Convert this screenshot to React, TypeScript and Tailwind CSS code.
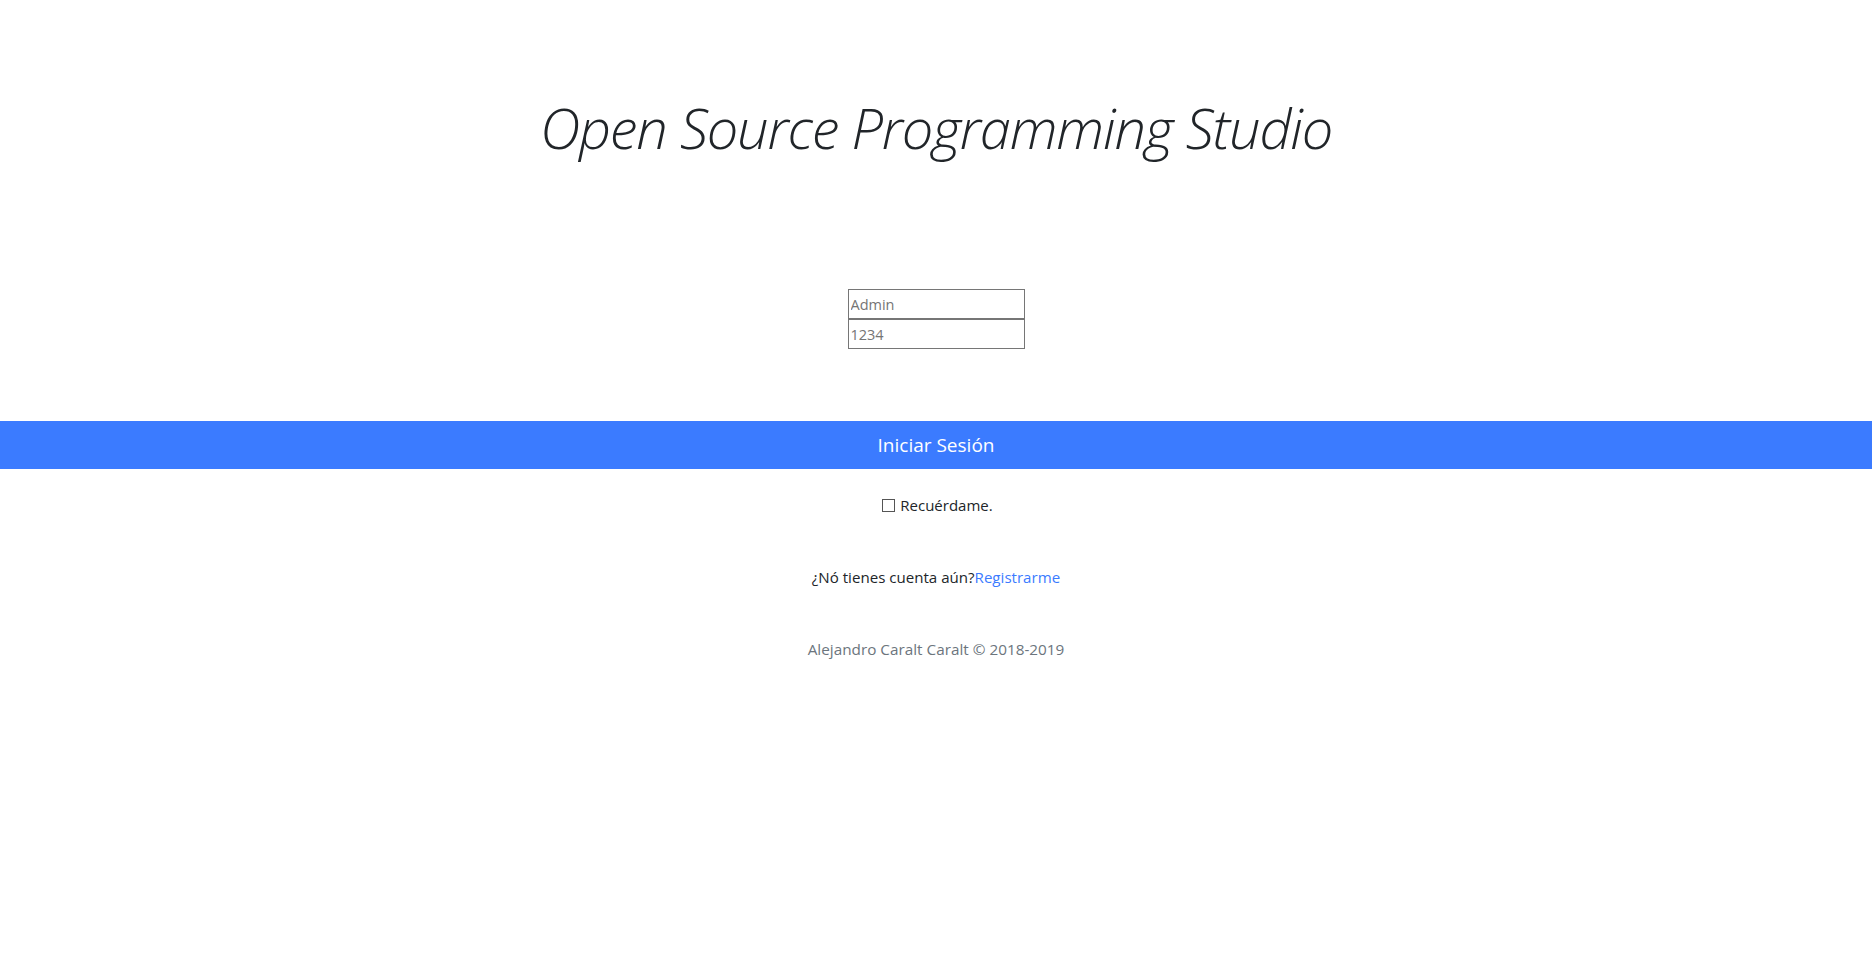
import React from "react";

export default function App() {
  const font = { fontFamily: '"Open Sans", "Noto Sans", sans-serif' } as React.CSSProperties;
  return (
    <div className="min-h-[977px] w-full bg-white flex flex-col items-center text-[#212529]" style={font}>
      <h1 className="mt-[94px] text-[56px] leading-[1.2] font-light italic tracking-[-1.2px] text-[#212529]">
        Open Source Programming Studio
      </h1>
      <div className="mt-[128px] flex flex-col">
        <input
          className="h-[30px] w-[177px] border border-[#767676] px-[2px] text-[14.5px] placeholder:text-[#757575] outline-none"
          placeholder="Admin"
        />
        <input
          className="h-[30px] w-[177px] border border-[#767676] px-[2px] text-[14.5px] placeholder:text-[#757575] outline-none"
          placeholder="1234"
        />
      </div>
      <button className="mt-[72px] w-full h-[48px] border border-[#3b7bff] bg-[#3b7bff] text-white text-[19px] leading-[30px] py-2">
        Iniciar Sesión
      </button>
      <div className="mt-[24px] flex items-center h-[24px] text-[15px] leading-[24px]">
        <span className="inline-block w-[13px] h-[13px] border border-[#555] bg-white mr-[5px] mt-[1px] ml-[3px]" />
        <span>Recuérdame.</span>
      </div>
      <p className="mt-[48px] text-[15.1px] leading-[24px]">
        ¿Nó tienes cuenta aún?<a className="text-[#3b7bff]" href="#">Registrarme</a>
      </p>
      <p className="mt-[48px] text-[15.3px] leading-[24px] text-[#6c757d]">
        Alejandro Caralt Caralt © 2018-2019
      </p>
    </div>
  );
}
